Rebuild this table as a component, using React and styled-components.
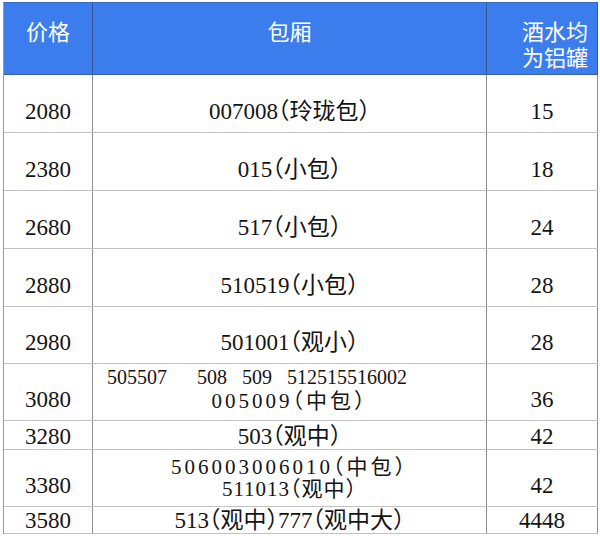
import React from "react";
import styled, { createGlobalStyle } from "styled-components";

const GlobalStyle = createGlobalStyle`
  body {
    margin: 0;
    background: #ffffff;
  }
`;

const rows = [
  { price: "2080", cans: "15", h: 58, lines: [{ text: "007008（玲珑包）" }] },
  { price: "2380", cans: "18", h: 58, lines: [{ text: "015（小包）" }] },
  { price: "2680", cans: "24", h: 58, lines: [{ text: "517（小包）" }] },
  { price: "2880", cans: "28", h: 58, lines: [{ text: "510519（小包）" }] },
  { price: "2980", cans: "28", h: 57, lines: [{ text: "501001（观小）" }] },
  {
    price: "3080",
    cans: "36",
    h: 57,
    midPb: 7,
    lines: [
      { text: "505507      508   509   512515516002", left: true, size: 20, lh: 23 },
      { text: "005009（中包）", ls: 3, lh: 24, size: 21 },
    ],
  },
  { price: "3280", cans: "42", h: 29, short: true, lines: [{ text: "503（观中）" }] },
  {
    price: "3380",
    cans: "42",
    h: 57,
    midPb: 6,
    lines: [
      { text: "506003006010（中包）", ls: 3, lh: 22, size: 21 },
      { text: "511013（观中）", ls: 1, lh: 22, size: 21 },
    ],
  },
  { price: "3580", cans: "4448", h: 27, short: true, lines: [{ text: "513（观中）777（观中大）" }] },
];

export default function App() {
  return (
    <>
      <GlobalStyle />
      <Sheet>
        <HeadRow>
          <HeadCell>
            <HeadLine>价格</HeadLine>
          </HeadCell>
          <HeadCell>
            <HeadLine>包厢</HeadLine>
          </HeadCell>
          <HeadCell $right>
            <HeadLine>酒水均</HeadLine>
            <HeadLine>为铝罐</HeadLine>
          </HeadCell>
        </HeadRow>
        {rows.map((r) => {
          const pb = r.short ? 1 : 9;
          return (
            <Row key={r.price} $h={r.h}>
              <Cell $pb={pb}>
                <Line>{r.price}</Line>
              </Cell>
              <Cell $pb={r.midPb ?? pb}>
                {r.lines.map((l, i) => (
                  <Line
                    key={i}
                    $left={l.left}
                    $size={l.size}
                    $ls={l.ls}
                    $lh={l.lh}
                  >
                    {l.text}
                  </Line>
                ))}
              </Cell>
              <Cell $pb={pb}>
                <Line>{r.cans}</Line>
              </Cell>
            </Row>
          );
        })}
      </Sheet>
    </>
  );
}

const Sheet = styled.div`
  margin: 2px 0 0 3px;
  width: 594px;
  border-left: 1px solid #9a9a9a;
`;

const HeadRow = styled.div`
  display: grid;
  grid-template-columns: 89px 394px 111px;
  height: 73px;
  background: #3b7ded;
  border-top: 1px solid #3567c4;
  border-bottom: 1px solid #3a5f9e;
  box-sizing: border-box;
`;

const HeadCell = styled.div`
  box-sizing: border-box;
  display: flex;
  flex-direction: column;
  gap: 4px;
  align-items: ${(p) => (p.$right ? "flex-end" : "center")};
  padding: 19px ${(p) => (p.$right ? "9px" : "0")} 0 0;
  border-right: 1px solid #33578f;
`;

const HeadLine = styled.div`
  color: #ffffff;
  font-family: "Liberation Sans", "Noto Sans CJK SC", sans-serif;
  font-size: 22px;
  line-height: 22px;
`;

const Row = styled.div`
  display: grid;
  grid-template-columns: 89px 394px 111px;
  height: ${(p) => p.$h}px;
  box-sizing: border-box;
  border-bottom: 1px solid #c2c2c2;
`;

const Cell = styled.div`
  box-sizing: border-box;
  display: flex;
  flex-direction: column;
  justify-content: flex-end;
  padding: 0 0 ${(p) => p.$pb}px 0;
  border-right: 1px solid #8c8c8c;
  overflow: hidden;
`;

const Line = styled.div`
  color: #141414;
  font-family: "Liberation Serif", "Noto Sans CJK SC", serif;
  font-size: ${(p) => p.$size ?? 23}px;
  line-height: ${(p) => p.$lh ?? 22}px;
  letter-spacing: ${(p) => p.$ls ?? 0}px;
  text-align: ${(p) => (p.$left ? "left" : "center")};
  padding-left: ${(p) => (p.$left ? "14px" : "0")};
  white-space: pre;
  font-feature-settings: "halt";
`;
